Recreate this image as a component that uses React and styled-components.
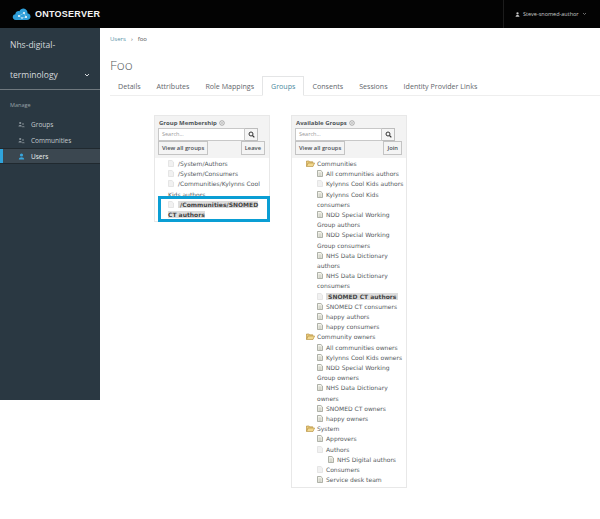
import React from "react";
import styled, { createGlobalStyle } from "styled-components";

const Global = createGlobalStyle`
  html, body { margin: 0; padding: 0; background: #fff; }
  body { font-family: "Open Sans", "Liberation Sans", sans-serif; color: #4d5258; }
  * { box-sizing: border-box; }
`;
const Page = styled.div`width: 600px; height: 519px; position: relative; overflow: hidden; background: #fff;`;
const Header = styled.header`height: 28px; background: #030303; display: flex; align-items: center; justify-content: space-between;`;
const Brand = styled.div`display: flex; align-items: center; gap: 4px; padding-left: 12px;`;
const BrandText = styled.span`font: 700 9px "Liberation Sans", sans-serif; letter-spacing: .25px; color: #f4f4f4;`;
const UserMenu = styled.div`
  width: 97px; height: 28px; border-left: 1px solid #1c1c1c; display: flex; align-items: center;
  gap: 3px; padding-left: 11px; font-size: 5.5px; color: #c9c9c9;
`;
const Body = styled.div`display: flex; align-items: flex-start;`;
const Sidebar = styled.aside`width: 100px; height: 372px; background: #2a3842; color: #d6dadd; flex: none;`;
const Realm = styled.div`
  height: 62px; padding: 2px 10px 0; border-bottom: 1px solid #6f787e; font-size: 8.5px; position: relative;
  display: flex; flex-direction: column;
`;
const RealmLine = styled.div`height: 30px; line-height: 30px;`;
const Caret = styled.svg`position: absolute; right: 10px; top: 45px;`;
const Manage = styled.div`font-size: 5.5px; color: #98a2a8; padding: 12px 0 7px 10px; line-height: 7px;`;
const NavItem = styled.div`
  height: 16px; display: flex; align-items: center; gap: 6px; padding-left: 18px; font-size: 6.5px;
  color: #c5cbcf; position: relative;
  ${p => p.$active && `
    background: #3b4750; color: #f0f2f3; border-top: 1px solid #20292f; border-bottom: 1px solid #20292f;
    &::before { content: ""; position: absolute; left: 0; top: 0; bottom: 0; width: 3px; background: #2fa4dc; }
  `}
`;
const Main = styled.main`flex: 1; padding-left: 10px; min-width: 0;`;
const Crumbs = styled.div`height: 20px; padding-top: 7px; font-size: 6px; line-height: 8px; display: flex; gap: 5px; color: #555;`;
const CrumbLink = styled.span`color: #5b93a8;`;
const Title = styled.h1`margin: 8px 0 0; font-size: 13.5px; line-height: 18px; font-weight: 300; color: #555b60;`;
const Tabs = styled.nav`display: flex; height: 20px; margin-top: 2px; border-bottom: 1px solid #eeeeee;`;
const Tab = styled.div`
  padding: 0 8px; height: 20px; line-height: 20px; font-size: 7.1px; color: #5f666c;
  ${p => p.$active && `color: #4d8a9e; background: #fff; border: 1px solid #e4e5e6; border-bottom-color: #fff; line-height: 19px;`}
`;
const Columns = styled.div`display: flex; align-items: flex-start; gap: 21px; padding: 19px 0 0 44px;`;
const Panel = styled.section`width: 116px; border: 1px solid #e8e8e8; background: #fff; position: relative;`;
const PanelHead = styled.div`background: #f3f3f3; padding: 3px 4px 0 3px; height: 42px;`;
const PanelTitle = styled.div`font-size: 6px; font-weight: 700; line-height: 8px; color: #4e5357; padding-left: 1px; display: flex; align-items: center; gap: 2px;`;
const SearchRow = styled.div`display: flex; height: 13px; margin-top: 1px;`;
const SearchInput = styled.div`width: 87px; background: #fff; border: 1px solid #c8c8c8; font-size: 5.5px; color: #9a9a9a; padding-left: 3px; line-height: 11px;`;
const SearchBtn = styled.div`width: 13px; background: #f5f5f5; border: 1px solid #bdbdbd; border-left: 0; display: flex; align-items: center; justify-content: center;`;
const ButtonRow = styled.div`display: flex; justify-content: space-between;`;
const Btn = styled.div`height: 14px; padding: 0 3px; border: 1px solid #c4c4c4; background: #f4f4f4; font-size: 5.8px; font-weight: 600; line-height: 12px; color: #4a4f54;`;
const Tree = styled.div`padding: 1px ${p => p.$right}px 1px ${p => p.$left}px; font: 6px/10.2px "DejaVu Sans", sans-serif; color: #555a5e;`;
const FileWrap = styled.span`display: inline-block; vertical-align: -1px; margin: 0 ${p => p.$gap}px 0 ${p => p.$indent}px;`;
const Selected = styled.span`background: #dcdcdc; font-weight: 700; color: #444;`;
const Highlight = styled.div`position: absolute; left: 3px; top: 80px; width: 112px; height: 26px; border: 3px solid #0a9ed4;`;

const FileIcon = ({ faded }) => (
  <svg width="6" height="7" viewBox="0 0 6 7" style={{ display: "block" }}>
    <path d="M.5.5h3.400l1.600 1.600v4.400H.5z" fill={faded ? "#f1f1f1" : "#f4f4ec"} stroke={faded ? "#dcdcdc" : "#8f9488"} strokeWidth=".7" />
    {!faded && <path d="M1.500 3h3M1.500 4.200h3M1.500 5.400h3" stroke="#a8ab9e" strokeWidth=".5" />}
  </svg>
);
const FolderIcon = () => (
  <svg width="9" height="7" viewBox="0 0 9 7" style={{ display: "block" }}>
    <path d="M.5 6.500V1h2.600l.7.8h3v1" fill="#e9c97c" stroke="#b08a35" strokeWidth=".6" />
    <path d="M.6 6.500 2 3h6.600L7 6.500z" fill="#f1d78f" stroke="#b08a35" strokeWidth=".6" />
  </svg>
);
const PeopleIcon = () => (
  <svg width="7" height="7" viewBox="0 0 7 7"><circle cx="2.200" cy="2" r="1.100" fill="#8a959c" /><path d="M.5 5.500c0-2 3.400-2 3.400 0z" fill="#8a959c" /><circle cx="5" cy="3" r=".9" fill="#6f7a81" /><path d="M3.800 6.200c0-1.700 2.900-1.700 2.900 0z" fill="#6f7a81" /></svg>
);
const UserIcon = ({ color = "#39a5dc", size = 7 }) => (
  <svg width={size} height={size} viewBox="0 0 7 7"><circle cx="3.500" cy="2" r="1.600" fill={color} /><path d="M.8 6.600c0-3 5.400-3 5.400 0z" fill={color} /></svg>
);
const SearchGlyph = () => (
  <svg width="7" height="7" viewBox="0 0 7 7"><circle cx="3" cy="3" r="2" fill="none" stroke="#333" strokeWidth="1" /><path d="M4.500 4.500 6.300 6.300" stroke="#333" strokeWidth="1.200" /></svg>
);
const Help = () => (
  <svg width="6" height="6" viewBox="0 0 6 6"><circle cx="3" cy="3" r="2.300" fill="none" stroke="#8b8b8b" strokeWidth=".7" /><circle cx="3" cy="3" r=".7" fill="#8b8b8b" /></svg>
);
const Cloud = () => (
  <svg width="19" height="14" viewBox="0 0 19 14">
    <path d="M4 13C1.500 13 .5 11 .8 9.500 1.100 8 2.200 7.300 3.300 7.300 3.500 4.800 5.700 3.700 7.400 4.200 8.500 1.800 11.400.8 13.600 2.200 15.300 3.300 15.700 5 15.500 6.300 17.500 6.500 18.700 8.200 18.500 10 18.200 12 16.800 13 15 13z" fill="#2f9ed8" />
    <g fill="#fff"><circle cx="7" cy="9" r="1" /><circle cx="12" cy="6" r="1" /><circle cx="14" cy="10" r="1" /><circle cx="10" cy="11" r=".8" /></g>
    <path d="M7 9 12 6 14 10 10 11z" fill="none" stroke="#cfeaf7" strokeWidth=".4" />
  </svg>
);

const membership = ["/System/Authors", "/System/Consumers", "/Communities/Kylynns Cool Kids authors"];
const groups = [
  ["f", "Communities"],
  ["a", "All communities authors"], ["b", "Kylynns Cool Kids authors"], ["a", "Kylynns Cool Kids consumers"],
  ["a", "NDD Special Working Group authors"], ["a", "NDD Special Working Group consumers"],
  ["a", "NHS Data Dictionary authors"], ["a", "NHS Data Dictionary consumers"], ["s", "SNOMED CT authors"],
  ["a", "SNOMED CT consumers"], ["a", "happy authors"], ["a", "happy consumers"],
  ["f", "Community owners"],
  ["a", "All communities owners"], ["a", "Kylynns Cool Kids owners"], ["a", "NDD Special Working Group owners"],
  ["a", "NHS Data Dictionary owners"], ["a", "SNOMED CT owners"], ["a", "happy owners"],
  ["f", "System"],
  ["a", "Approvers"], ["b", "Authors"], ["d", "NHS Digital authors"], ["b", "Consumers"], ["a", "Service desk team"],
];
const tabs = ["Details", "Attributes", "Role Mappings", "Groups", "Consents", "Sessions", "Identity Provider Links"];

export default function App() {
  return (
    <Page>
      <Global />
      <Header>
        <Brand><Cloud /><BrandText>ONTOSERVER</BrandText></Brand>
        <UserMenu>
          <UserIcon color="#c9c9c9" size={5} />
          <span>Steve-snomed-author</span>
          <svg width="5" height="4" viewBox="0 0 5 4"><path d="M1 1l1.500 1.500L4 1" fill="none" stroke="#999" strokeWidth=".7" /></svg>
        </UserMenu>
      </Header>
      <Body>
        <Sidebar>
          <Realm>
            <RealmLine>Nhs-digital-</RealmLine>
            <RealmLine>terminology</RealmLine>
            <Caret width="6" height="5" viewBox="0 0 6 5"><path d="M1 1l2 2 2-2" fill="none" stroke="#d6dadd" strokeWidth="1" /></Caret>
          </Realm>
          <Manage>Manage</Manage>
          <NavItem><PeopleIcon />Groups</NavItem>
          <NavItem><PeopleIcon />Communities</NavItem>
          <NavItem $active><UserIcon />Users</NavItem>
        </Sidebar>
        <Main>
          <Crumbs><CrumbLink>Users</CrumbLink><span>›</span><span>foo</span></Crumbs>
          <Title>Foo</Title>
          <Tabs>
            {tabs.map(t => <Tab key={t} $active={t === "Groups"}>{t}</Tab>)}
          </Tabs>
          <Columns>
            <Panel>
              <PanelHead>
                <PanelTitle>Group Membership <Help /></PanelTitle>
                <SearchRow><SearchInput>Search...</SearchInput><SearchBtn><SearchGlyph /></SearchBtn></SearchRow>
                <ButtonRow><Btn>View all groups</Btn><Btn>Leave</Btn></ButtonRow>
              </PanelHead>
              <Tree $left={13} $right={8}>
                {membership.map(t => (
                  <div key={t}><FileWrap $indent={0} $gap={4}><FileIcon faded /></FileWrap>{t}</div>
                ))}
                <div><FileWrap $indent={0} $gap={4}><FileIcon faded /></FileWrap><Selected>&nbsp;/Communities/SNOMED CT authors</Selected></div>
              </Tree>
              <Highlight />
            </Panel>
            <Panel>
              <PanelHead>
                <PanelTitle>Available Groups <Help /></PanelTitle>
                <SearchRow><SearchInput>Search...</SearchInput><SearchBtn><SearchGlyph /></SearchBtn></SearchRow>
                <ButtonRow><Btn>View all groups</Btn><Btn>Join</Btn></ButtonRow>
              </PanelHead>
              <Tree $left={25} $right={0}>
                {groups.map(([k, t], i) => {
                  if (k === "f") return <div key={i}><FileWrap $indent={-11} $gap={2}><FolderIcon /></FileWrap>{t}</div>;
                  return (
                    <div key={i}>
                      <FileWrap $indent={k === "d" ? 11 : 0} $gap={3}><FileIcon faded={k === "b" || k === "s"} /></FileWrap>
                      {k === "s" ? <Selected>&nbsp;SNOMED CT authors&nbsp;</Selected> : t}
                    </div>
                  );
                })}
              </Tree>
            </Panel>
          </Columns>
        </Main>
      </Body>
    </Page>
  );
}
